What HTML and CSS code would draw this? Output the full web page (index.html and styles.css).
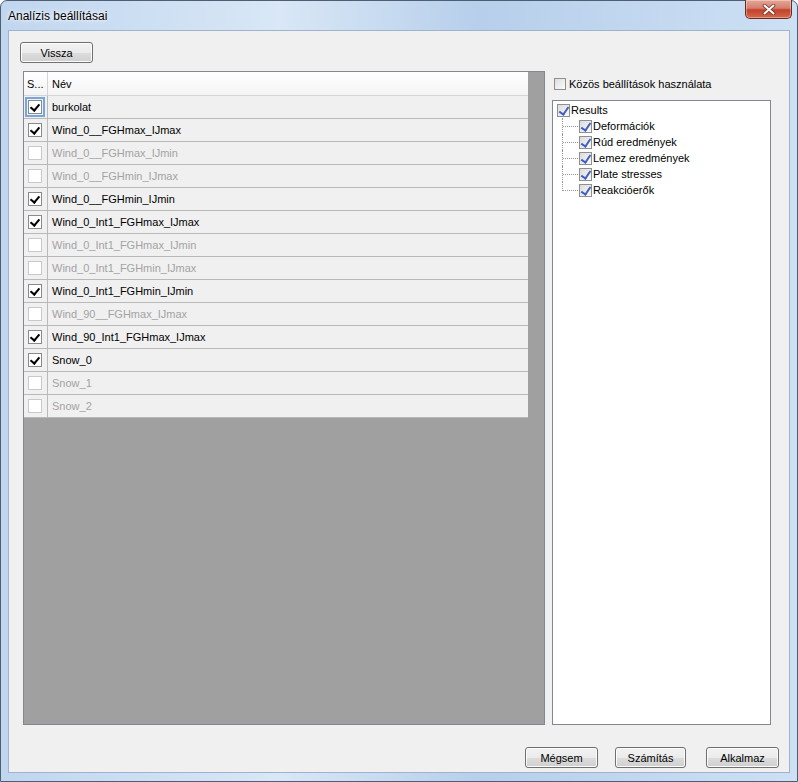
FILE: index.html
```html
<!DOCTYPE html>
<html lang="hu">
<head>
  <meta charset="UTF-8">
  <title>Analízis beállításai</title>
  <link rel="stylesheet" href="styles.css">
</head>
<body>
  <div class="window">
    <div class="titlebar">
      <span class="title">Analízis beállításai</span>
      <button class="close-btn" title="Bezárás">
        <svg width="14" height="11" viewBox="0 0 14 11">
          <path d="M2.5 1.5 L11.5 9.5 M11.5 1.5 L2.5 9.5" stroke="#6b3328" stroke-width="3.6" stroke-linecap="round"/>
          <path d="M2.5 1.5 L11.5 9.5 M11.5 1.5 L2.5 9.5" stroke="#fff" stroke-width="2" stroke-linecap="round"/>
        </svg>
      </button>
    </div>

    <div class="client">
      <div class="top-bar">
        <button class="btn">Vissza</button>
      </div>

      <div class="main">
        <!-- load case grid -->
        <div class="grid">
          <div class="grid-head">
            <div class="cell-check">S...</div>
            <div class="cell-name">Név</div>
          </div>
          <div class="grid-row current">
            <div class="cell-check"><span class="chk on focus"></span></div>
            <div class="cell-name">burkolat</div>
          </div>
          <div class="grid-row">
            <div class="cell-check"><span class="chk on"></span></div>
            <div class="cell-name">Wind_0__FGHmax_IJmax</div>
          </div>
          <div class="grid-row off">
            <div class="cell-check"><span class="chk"></span></div>
            <div class="cell-name">Wind_0__FGHmax_IJmin</div>
          </div>
          <div class="grid-row off">
            <div class="cell-check"><span class="chk"></span></div>
            <div class="cell-name">Wind_0__FGHmin_IJmax</div>
          </div>
          <div class="grid-row">
            <div class="cell-check"><span class="chk on"></span></div>
            <div class="cell-name">Wind_0__FGHmin_IJmin</div>
          </div>
          <div class="grid-row">
            <div class="cell-check"><span class="chk on"></span></div>
            <div class="cell-name">Wind_0_Int1_FGHmax_IJmax</div>
          </div>
          <div class="grid-row off">
            <div class="cell-check"><span class="chk"></span></div>
            <div class="cell-name">Wind_0_Int1_FGHmax_IJmin</div>
          </div>
          <div class="grid-row off">
            <div class="cell-check"><span class="chk"></span></div>
            <div class="cell-name">Wind_0_Int1_FGHmin_IJmax</div>
          </div>
          <div class="grid-row">
            <div class="cell-check"><span class="chk on"></span></div>
            <div class="cell-name">Wind_0_Int1_FGHmin_IJmin</div>
          </div>
          <div class="grid-row off">
            <div class="cell-check"><span class="chk"></span></div>
            <div class="cell-name">Wind_90__FGHmax_IJmax</div>
          </div>
          <div class="grid-row">
            <div class="cell-check"><span class="chk on"></span></div>
            <div class="cell-name">Wind_90_Int1_FGHmax_IJmax</div>
          </div>
          <div class="grid-row">
            <div class="cell-check"><span class="chk on"></span></div>
            <div class="cell-name">Snow_0</div>
          </div>
          <div class="grid-row off">
            <div class="cell-check"><span class="chk"></span></div>
            <div class="cell-name">Snow_1</div>
          </div>
          <div class="grid-row off">
            <div class="cell-check"><span class="chk"></span></div>
            <div class="cell-name">Snow_2</div>
          </div>
        </div>

        <!-- result settings -->
        <div class="side">
          <label class="common"><span class="box"></span>Közös beállítások használata</label>
          <div class="tree">
            <div class="node root"><span class="tchk"></span>Results</div>
            <div class="children">
              <div class="node child"><span class="tchk"></span>Deformációk</div>
              <div class="node child"><span class="tchk"></span>Rúd eredmények</div>
              <div class="node child"><span class="tchk"></span>Lemez eredmények</div>
              <div class="node child"><span class="tchk"></span>Plate stresses</div>
              <div class="node child last"><span class="tchk"></span>Reakcióerők</div>
            </div>
          </div>
        </div>
      </div>

      <div class="footer">
        <button class="btn">Mégsem</button>
        <button class="btn btn-calc">Számítás</button>
        <button class="btn btn-apply">Alkalmaz</button>
      </div>
    </div>
  </div>
</body>
</html>
```

FILE: styles.css
```css
/* Global */
* {
  box-sizing: border-box;
  font-family: "Liberation Sans", Arial, sans-serif;
}

body {
  margin: 0;
  padding: 0;
  background: #fff;
}

/* Window frame */
.window {
  width: 798px;
  height: 782px;
  border: 1px solid #4f5f73;
  border-radius: 7px 7px 0 0;
  padding: 0 7px 8px 7px;
  display: flex;
  flex-direction: column;
  background: linear-gradient(to right, #c0d6ef 0%, #d9e7f6 35%, #b7cfeb 60%, #cde0f4 100%);
}

.titlebar {
  height: 29px;
  margin: 0 -7px;
  padding: 0 5px 0 7px;
  display: flex;
  justify-content: space-between;
  align-items: flex-start;
}

.title {
  font-size: 12px;
  color: #000;
  margin-top: 8px;
  text-shadow: 0 0 6px #fff, 0 0 3px #fff;
}

.close-btn {
  width: 47px;
  height: 19px;
  margin-top: -1px;
  border: 1px solid #6b2b22;
  border-top: none;
  border-radius: 0 0 5px 5px;
  background: linear-gradient(to bottom, #e6a596 0%, #d4806d 45%, #c2412b 55%, #d5694c 100%);
  box-shadow: inset 0 0 0 1px rgba(255, 255, 255, 0.35);
  display: flex;
  align-items: center;
  justify-content: center;
  padding: 0;
}

/* Client area */
.client {
  flex: 1;
  background: #f0f0f0;
  border: 1px solid #9eb3cc;
  padding: 11px 10px 0 11px;
  display: flex;
  flex-direction: column;
}

.btn {
  width: 73px;
  height: 21px;
  font-size: 11px;
  color: #000;
  border: 1px solid #707070;
  border-radius: 3px;
  background: linear-gradient(to bottom, #f2f2f2 0%, #ebebeb 50%, #dddddd 51%, #cfcfcf 100%);
  box-shadow: inset 0 0 0 1px #fcfcfc;
  padding: 0;
}

.main {
  display: flex;
  margin-top: 8px;
  height: 654px;
}

/* Grid */
.grid {
  margin-left: 3px;
  width: 522px;
  height: 654px;
  background: #a0a0a0;
  border: 1px solid #828790;
  font-size: 11px;
}

.grid-head,
.grid-row {
  width: 504px;
  height: 23px;
  display: flex;
  border-bottom: 1px solid #b9b9b9;
}

.grid-head {
  height: 24px;
  background: linear-gradient(to bottom, #ffffff, #f4f4f4);
  border-bottom: 1px solid #d5d5d5;
}

.grid-row {
  background: #f0f0f0;
}

.cell-check {
  width: 24px;
  border-right: 1px solid #b9b9b9;
  display: flex;
  align-items: center;
  padding-left: 4px;
}

.grid-head .cell-check {
  border-right: 1px solid #d5d5d5;
  padding-left: 3px;
}

.cell-name {
  flex: 1;
  display: flex;
  align-items: center;
  padding-left: 4px;
  color: #000;
}

.grid-row.off .cell-name {
  color: #a3a3a3;
}

.chk {
  width: 14px;
  height: 14px;
  background: #fff;
  border: 1px solid #c9c9c9;
  display: block;
  position: relative;
}

.chk.on {
  border-color: #8a8a8a;
}

.chk.on::after {
  content: "";
  position: absolute;
  left: 3px;
  top: 1px;
  width: 4px;
  height: 7px;
  border: solid #000;
  border-width: 0 2px 2px 0;
  transform: rotate(40deg);
}

.chk.focus {
  outline: 2px solid #76a6dc;
  outline-offset: 1px;
}

/* Right side panel */
.side {
  margin-left: 7px;
  width: 219px;
  display: flex;
  flex-direction: column;
  font-size: 11px;
}

.common {
  display: flex;
  align-items: center;
  height: 14px;
  margin: 6px 0 0 2px;
}

.common .box {
  width: 12px;
  height: 12px;
  border: 1px solid #8e8f8f;
  background: linear-gradient(135deg, #dedede, #fbfbfb);
  margin-right: 3px;
}

.tree {
  margin-top: 9px;
  flex: 1;
  background: #fff;
  border: 1px solid #828790;
  padding: 1px 0 0 4px;
}

.node {
  height: 16px;
  display: flex;
  align-items: center;
}

.tchk {
  width: 13px;
  height: 13px;
  border: 1px solid #8e8f8f;
  background: linear-gradient(135deg, #dcdcdc, #fafafa);
  margin-right: 1px;
  position: relative;
}

.tchk::after {
  content: "";
  position: absolute;
  left: 3px;
  top: 0px;
  width: 4px;
  height: 8px;
  border: solid #3f5fc2;
  border-width: 0 2px 2px 0;
  transform: rotate(35deg);
}

/* tree connector lines */
.children {
  margin-left: 5px;
}

.node.child {
  position: relative;
  padding-left: 17px;
}

.node.child::before {
  content: "";
  position: absolute;
  left: 0;
  top: 0;
  height: 16px;
  border-left: 1px dotted #9a9a9a;
}

.node.child.last::before {
  height: 9px;
}

.node.child::after {
  content: "";
  position: absolute;
  left: 1px;
  top: 8px;
  width: 15px;
  border-top: 1px dotted #9a9a9a;
}

/* Bottom buttons */
.footer {
  display: flex;
  justify-content: flex-end;
  margin-top: 22px;
}

.btn-calc {
  margin-left: 17px;
  width: 71px;
}

.btn-apply {
  margin-left: 20px;
}
```
